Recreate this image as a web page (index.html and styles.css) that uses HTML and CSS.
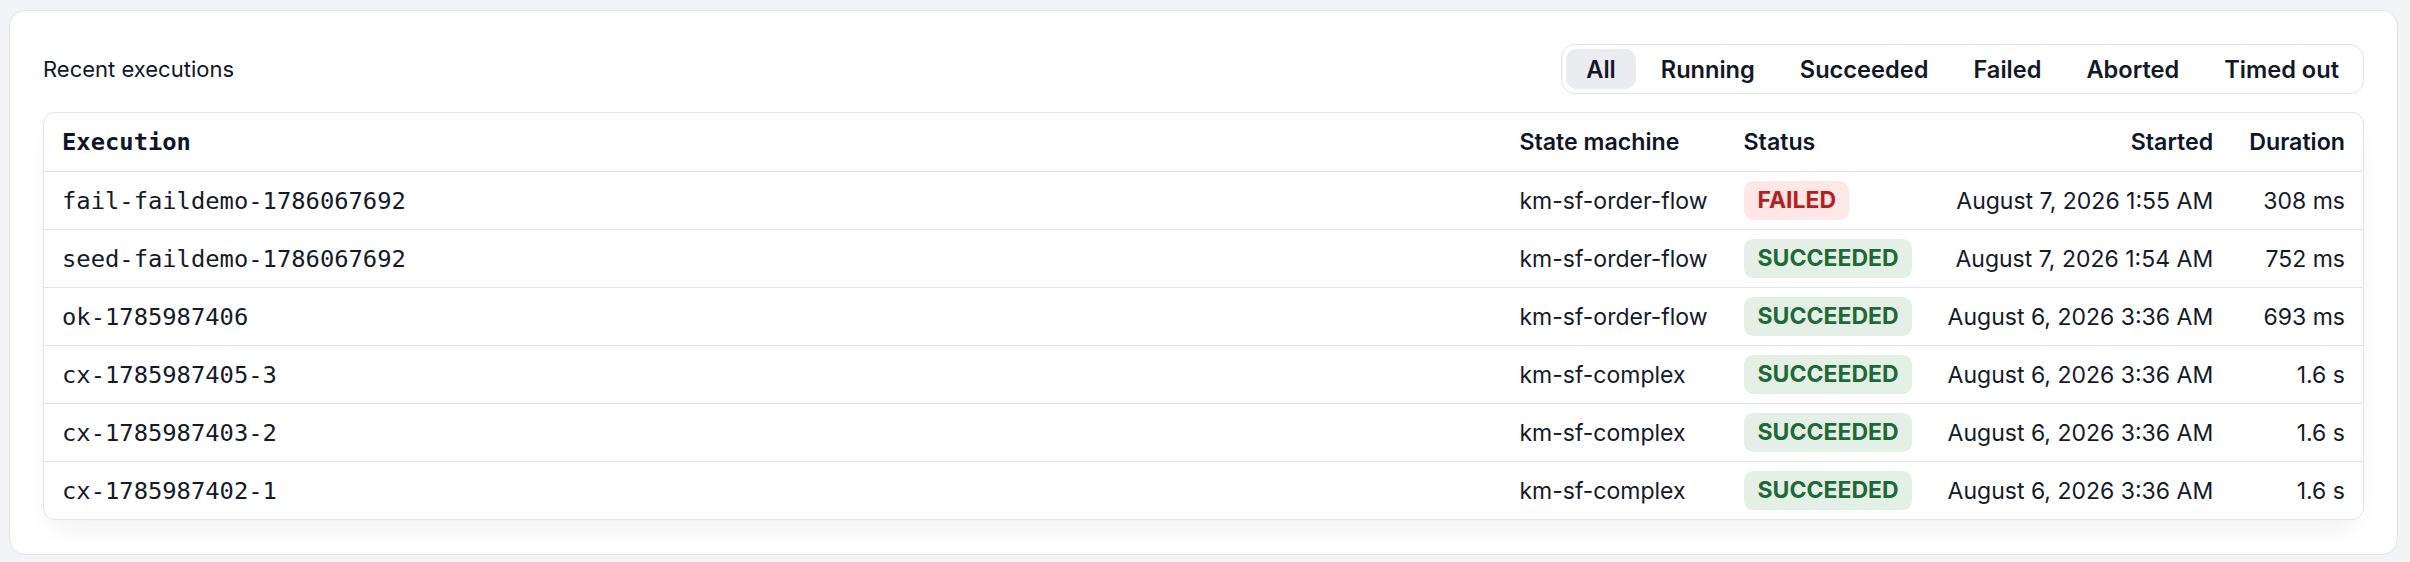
FILE: index.html
```html
<!DOCTYPE html>
<html lang="en">
<head>
<meta charset="utf-8">
<title>Recent executions</title>
<link rel="stylesheet" href="styles.css">
</head>
<body>
<div class="page">
  <section class="card">
    <div class="card-head">
      <h2 class="title">Recent executions</h2>
      <nav class="tabs">
        <button class="tab active">All</button>
        <button class="tab">Running</button>
        <button class="tab">Succeeded</button>
        <button class="tab">Failed</button>
        <button class="tab">Aborted</button>
        <button class="tab">Timed out</button>
      </nav>
    </div>
    <div class="table-wrap">
      <table class="exec-table">
        <thead>
          <tr>
            <th class="col-exec">Execution</th>
            <th>State machine</th>
            <th>Status</th>
            <th class="num">Started</th>
            <th class="num">Duration</th>
          </tr>
        </thead>
        <tbody>
          <tr>
            <td class="col-exec">fail-faildemo-1786067692</td>
            <td>km-sf-order-flow</td>
            <td><span class="badge failed">FAILED</span></td>
            <td class="num">August 7, 2026 1:55 AM</td>
            <td class="num">308 ms</td>
          </tr>
          <tr>
            <td class="col-exec">seed-faildemo-1786067692</td>
            <td>km-sf-order-flow</td>
            <td><span class="badge ok">SUCCEEDED</span></td>
            <td class="num">August 7, 2026 1:54 AM</td>
            <td class="num">752 ms</td>
          </tr>
          <tr>
            <td class="col-exec">ok-1785987406</td>
            <td>km-sf-order-flow</td>
            <td><span class="badge ok">SUCCEEDED</span></td>
            <td class="num">August 6, 2026 3:36 AM</td>
            <td class="num">693 ms</td>
          </tr>
          <tr>
            <td class="col-exec">cx-1785987405-3</td>
            <td>km-sf-complex</td>
            <td><span class="badge ok">SUCCEEDED</span></td>
            <td class="num">August 6, 2026 3:36 AM</td>
            <td class="num">1.6 s</td>
          </tr>
          <tr>
            <td class="col-exec">cx-1785987403-2</td>
            <td>km-sf-complex</td>
            <td><span class="badge ok">SUCCEEDED</span></td>
            <td class="num">August 6, 2026 3:36 AM</td>
            <td class="num">1.6 s</td>
          </tr>
          <tr>
            <td class="col-exec">cx-1785987402-1</td>
            <td>km-sf-complex</td>
            <td><span class="badge ok">SUCCEEDED</span></td>
            <td class="num">August 6, 2026 3:36 AM</td>
            <td class="num">1.6 s</td>
          </tr>
        </tbody>
      </table>
    </div>
  </section>
</div>
</body>
</html>
```

FILE: styles.css
```css
* { box-sizing: border-box; }

html, body {
  margin: 0;
  background: #f3f4f7;
}

body {
  font-family: Inter, "Noto Sans", "Liberation Sans", sans-serif;
  color: #0f1626;
}

.page {
  padding: 10px 12px 9px 9px;
}

.card {
  background: #ffffff;
  border: 1px solid #e2e4ea;
  border-radius: 16px;
  padding: 33px 33px 34px 33px;
}

.card-head {
  display: flex;
  align-items: center;
  justify-content: space-between;
  margin-bottom: 18px;
}

.title {
  margin: 0;
  font-size: 22px;
  font-weight: 400;
  color: #0f1626;
}

.tabs {
  display: flex;
  gap: 5px;
  padding: 4px;
  border: 1px solid #e2e4ea;
  border-radius: 14px;
  background: #fff;
}

.tab {
  font-family: inherit;
  font-size: 23.6px;
  font-weight: 600;
  color: #111827;
  background: transparent;
  border: 0;
  border-radius: 11px;
  height: 40px;
  padding: 0 20px;
  cursor: pointer;
}

.tab.active {
  background: #ebecef;
}

.table-wrap {
  border: 1px solid #e2e4ea;
  border-radius: 12px;
  overflow: hidden;
  box-shadow: 0 14px 28px -10px rgba(20, 30, 50, 0.08);
}

.exec-table {
  width: 100%;
  border-collapse: separate;
  border-spacing: 0;
  font-size: 23px;
}

.exec-table th,
.exec-table td {
  padding: 0 18px;
  text-align: left;
  white-space: nowrap;
  vertical-align: middle;
}

.exec-table th {
  height: 58px;
  font-size: 23.2px;
  font-weight: 600;
  color: #0f1626;
}

.exec-table td {
  height: 58px;
  border-top: 1px solid #e2e4ea;
  color: #141a26;
}

.exec-table .col-exec {
  width: 100%;
  font-family: "DejaVu Sans Mono", "Liberation Mono", monospace;
  font-size: 23.8px;
}

.exec-table th.col-exec {
  font-weight: 700;
}

.exec-table .num {
  text-align: right;
}

.badge {
  display: inline-block;
  height: 39px;
  line-height: 39px;
  padding: 0 13px 0 14px;
  border-radius: 9px;
  font-size: 23px;
  font-weight: 700;
}

.badge.failed {
  background: #fde7e7;
  color: #b91c1c;
}

.badge.ok {
  background: #e4f0e6;
  color: #1d6a36;
}
```
